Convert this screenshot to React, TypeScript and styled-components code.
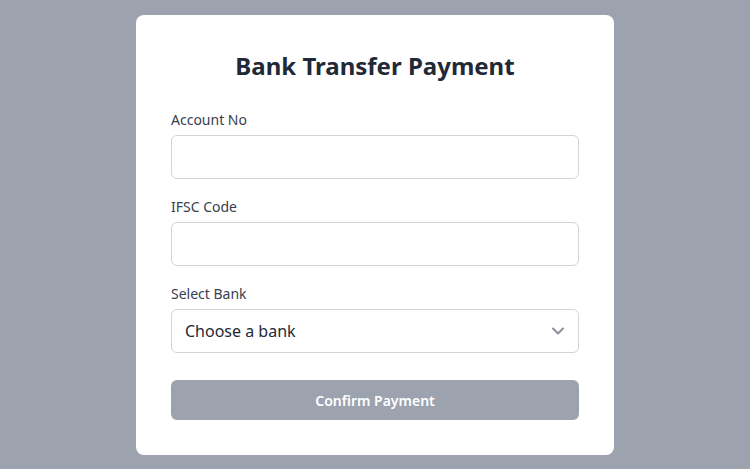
import React from "react";
import styled, { createGlobalStyle } from "styled-components";

const GlobalStyle = createGlobalStyle`
  html, body {
    margin: 0;
    padding: 0;
    background: #9ca3af;
    font-family: "Noto Sans", "Open Sans", sans-serif;
  }
  * {
    box-sizing: border-box;
  }
`;

const Page = styled.div`
  min-height: 469px;
  display: flex;
  justify-content: center;
  padding-top: 15px;
`;

const Card = styled.form`
  width: 478px;
  height: 440px;
  background: #ffffff;
  border-radius: 8px;
  padding: 35px;
  display: flex;
  flex-direction: column;
`;

const Title = styled.h1`
  margin: 0 0 28px;
  font-size: 24px;
  line-height: 32px;
  font-weight: 700;
  color: #1f2937;
  text-align: center;
`;

const Field = styled.div`
  display: flex;
  flex-direction: column;
  margin-bottom: 18px;
`;

const Label = styled.label`
  font-size: 14px;
  line-height: 20px;
  color: #374151;
  margin-bottom: 5px;
`;

const Input = styled.input`
  height: 44px;
  width: 100%;
  border: 1px solid #d1d5db;
  border-radius: 6px;
  padding: 0 13px;
  font-family: inherit;
  font-size: 16px;
  color: #1f2937;
  background: #fff;
  outline: none;
`;

const SelectWrap = styled.div`
  position: relative;
`;

const Select = styled.select`
  appearance: none;
  height: 44px;
  width: 100%;
  border: 1px solid #d1d5db;
  border-radius: 6px;
  padding: 0 40px 0 13px;
  font-family: inherit;
  font-size: 16px;
  color: #1f2937;
  background: #fff;
  outline: none;
`;

const Chevron = styled.svg`
  position: absolute;
  right: 11px;
  top: 50%;
  transform: translateY(-50%);
  pointer-events: none;
`;

const Button = styled.button`
  margin-top: 9px;
  height: 40px;
  width: 100%;
  border: none;
  border-radius: 6px;
  background: #9ca3af;
  color: #ffffff;
  font-family: inherit;
  font-size: 14px;
  font-weight: 600;
  cursor: not-allowed;
`;

const App: React.FC = () => {
  return (
    <>
      <GlobalStyle />
      <Page>
        <Card onSubmit={(e) => e.preventDefault()}>
          <Title>Bank Transfer Payment</Title>
          <Field>
            <Label htmlFor="account">Account No</Label>
            <Input id="account" type="text" />
          </Field>
          <Field>
            <Label htmlFor="ifsc">IFSC Code</Label>
            <Input id="ifsc" type="text" />
          </Field>
          <Field>
            <Label htmlFor="bank">Select Bank</Label>
            <SelectWrap>
              <Select id="bank" defaultValue="">
                <option value="">Choose a bank</option>
                <option value="sbi">State Bank of India</option>
                <option value="hdfc">HDFC Bank</option>
                <option value="icici">ICICI Bank</option>
              </Select>
              <Chevron width="20" height="20" viewBox="0 0 24 24" fill="none" stroke="#8b929c" strokeWidth="2.5" strokeLinecap="round" strokeLinejoin="round">
                <path d="M6 9l6 6 6-6" />
              </Chevron>
            </SelectWrap>
          </Field>
          <Button type="submit" disabled>
            Confirm Payment
          </Button>
        </Card>
      </Page>
    </>
  );
};

export default App;
